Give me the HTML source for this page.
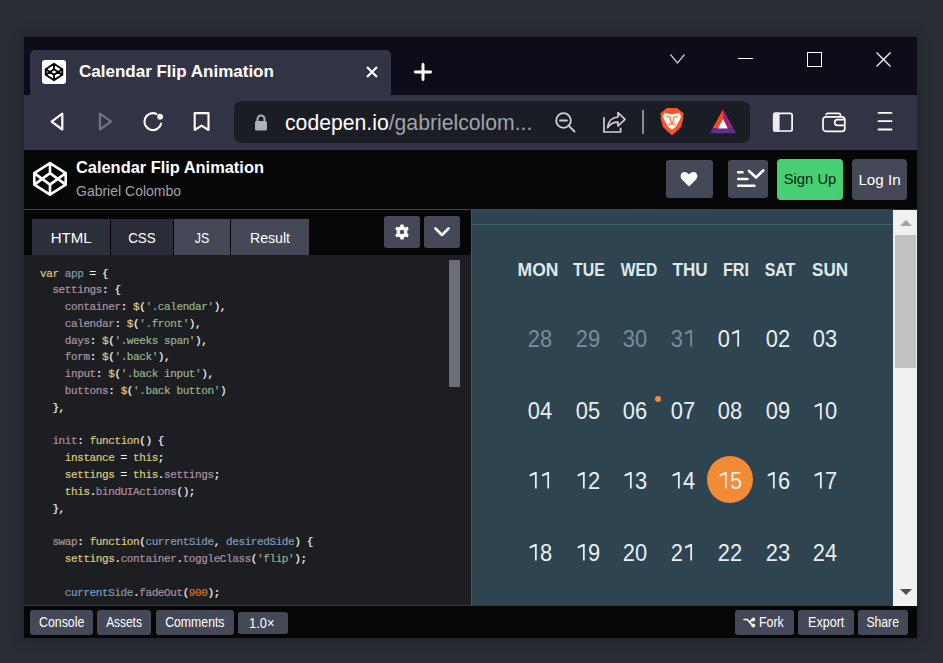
<!DOCTYPE html>
<html><head><meta charset="utf-8">
<style>
*{box-sizing:border-box}
html,body{margin:0;padding:0}
body{width:943px;height:663px;overflow:hidden;position:relative;background:#2a2d35;font-family:"Liberation Sans",sans-serif;color:#fff}
.a{position:absolute}
svg{position:absolute;overflow:visible}
.btn{position:absolute;background:#444857;border-radius:3px;color:#fff;text-align:center;white-space:nowrap}
.t{display:inline-block;text-indent:0}
.fb{height:25px;font-size:14px;line-height:25px}
.code{position:absolute;left:40px;top:265.5px;font-family:"Liberation Mono",monospace;font-size:11px;letter-spacing:-0.4px;line-height:16.8px;white-space:pre;color:#f2f2f2;-webkit-text-stroke:0.2px currentColor}
.k{color:#ddca7e}.v{color:#809bbd}.p{color:#ab92a4}.s{color:#96b38a}.n{color:#d0782a}
.wd{position:absolute;top:262px;width:60px;text-align:center;font-size:17.8px;font-weight:bold;line-height:17.8px;color:#dfe9ec}
.num{position:absolute;width:50px;text-align:center;font-size:23px;line-height:23px;transform:scaleX(0.95);color:#e9eff1}
.num.m{color:#778d97}
.num svg.one{position:static;display:inline-block;vertical-align:baseline;overflow:visible}
</style></head>
<body>
<!-- window frame / tab strip -->
<div class="a" style="left:24px;top:37px;width:893px;height:601px;box-shadow:0 0 12px 2px rgba(0,0,0,0.26)"></div>
<div class="a" style="left:24px;top:37px;width:893px;height:58px;background:#0c0d18"></div>
<div class="a" style="left:30px;top:50px;width:361px;height:45px;background:#323445;border-radius:5px 5px 0 0"></div>
<!-- favicon -->
<div class="a" style="left:42px;top:60px;width:24px;height:24px;background:#fff;border-radius:3px"></div>
<svg style="left:42px;top:60px" width="24" height="24" viewBox="0 0 24 24"><path d="M12 3.8L20.3 9.2V14.8L12 20.1L3.7 14.8V9.2Z M12 3.8V9.2 M12 20.1V14.8 M3.7 9.2L12 14.8L20.3 9.2 M3.7 14.8L12 9.2L20.3 14.8" fill="none" stroke="#000" stroke-width="1.85" stroke-linejoin="round"/></svg>
<div class="a" style="left:79px;top:61px;font-size:17px;font-weight:bold;line-height:22px;color:#fff;white-space:nowrap">Calendar Flip Animation</div>
<svg style="left:366px;top:66px" width="12" height="12"><path d="M1 1L11 11M11 1L1 11" stroke="#fff" stroke-width="2.2"/></svg>
<svg style="left:414px;top:63px" width="18" height="18"><path d="M9 1.4V16.6M1.4 9H16.6" stroke="#fff" stroke-width="2.9" stroke-linecap="round"/></svg>
<!-- window controls -->
<svg style="left:670px;top:54px" width="15" height="10"><path d="M0.5 0.5L7.5 9L14.5 0.5" fill="none" stroke="#c8c9cf" stroke-width="1.2"/></svg>
<div class="a" style="left:738px;top:58px;width:15px;height:1.3px;background:#fff"></div>
<div class="a" style="left:807px;top:52px;width:15px;height:15px;border:1.3px solid #fff"></div>
<svg style="left:876px;top:52px" width="15" height="15"><path d="M0.5 0.5L14.5 14.5M14.5 0.5L0.5 14.5" stroke="#fff" stroke-width="1.3"/></svg>

<!-- toolbar -->
<div class="a" style="left:24px;top:95px;width:893px;height:55px;background:#323445"></div>
<svg style="left:48px;top:110px" width="18" height="24"><path d="M14.3 3.6V19.5L3.6 11.55Z" fill="none" stroke="#fff" stroke-width="2.2" stroke-linejoin="round"/></svg>
<svg style="left:96px;top:110px" width="18" height="24"><path d="M3.9 3.6V19.5L15 11.55Z" fill="none" stroke="#737483" stroke-width="2.2" stroke-linejoin="round"/></svg>
<svg style="left:141px;top:110px" width="24" height="24"><path d="M15.5 3.9A8.5 8.5 0 1 0 20.2 13.6" fill="none" stroke="#fff" stroke-width="2.1" stroke-linecap="round"/><circle cx="19.1" cy="6.7" r="2.9" fill="#fff"/></svg>
<svg style="left:191px;top:110px" width="20" height="24"><path d="M3.7 3.1H17.5V20L10.6 15.6L3.7 20Z" fill="none" stroke="#fff" stroke-width="2.1" stroke-linejoin="round"/></svg>
<!-- url box -->
<div class="a" style="left:234px;top:101px;width:516px;height:42px;background:#1b1d25;border-radius:8px"></div>
<svg style="left:254px;top:114px" width="14" height="17"><path d="M3.5 7V5A3.5 3.5 0 0 1 10.5 5V7" fill="none" stroke="#aeb0b6" stroke-width="2"/><rect x="1" y="7" width="12" height="9.5" rx="1.5" fill="#aeb0b6"/></svg>
<div class="a" style="left:285px;top:110.3px;font-size:21.2px;line-height:26px;white-space:nowrap"><span style="color:#fff">codepen.io</span><span style="color:#9fa3ab">/gabrielcolom...</span></div>
<!-- zoom out -->
<svg style="left:555px;top:112px" width="21" height="21"><circle cx="8.5" cy="8.5" r="7.3" fill="none" stroke="#d0d1d6" stroke-width="1.8"/><path d="M5 8.5H12M13.8 13.8L19.5 19.5" stroke="#d0d1d6" stroke-width="1.8" stroke-linecap="round"/></svg>
<!-- share -->
<svg style="left:603px;top:111px" width="24" height="23"><path d="M1 6.2V21H17.6V16.7" fill="none" stroke="#d0d1d6" stroke-width="1.7"/><path d="M4.6 16.7C5 10.5 9 6.5 15 6V1.6L22 8.4L15 15V11.2C10 11.2 7 13 4.6 16.7Z" fill="none" stroke="#d0d1d6" stroke-width="1.7" stroke-linejoin="round"/></svg>
<div class="a" style="left:642px;top:110px;width:1.8px;height:24px;background:#8a8c95"></div>
<!-- brave lion -->
<svg style="left:655px;top:105px" width="34" height="34" viewBox="0 0 34 34"><path d="M12 3H22L24.5 5L28.8 8.5L28 11L28.5 13L26 22Q22 26.5 17 30.3Q12 26.5 8 22L5.5 13L6 11L5.2 8.5L9.5 5Z" fill="#fb542b"/><path d="M9.5 7.8L14 9H20L24.5 7.8L26.2 11.5L25 14.5L23 18L21 21.8L17 24.8L13 21.8L11 18L9 14.5L7.8 11.5Z" fill="#fff4ee"/><path d="M11.5 11.2L15.2 12.4L16 17.2L17 18L18 17.2L18.8 12.4L22.5 11.2M13.5 19.6L17 18.8L20.5 19.6" fill="none" stroke="#f26a3d" stroke-width="1.1" stroke-linejoin="round"/></svg>
<!-- BAT -->
<svg style="left:709px;top:109px" width="28" height="25" viewBox="0 0 28 25"><path d="M14 0.6L3.45 19.6H8.8L14 9.8Z" fill="#ff4724"/><path d="M14 0.6L24.5 19.6H18.8L14 9.8Z" fill="#a3207a"/><path d="M0.9 24.2H27L24.5 19.6H3.45Z" fill="#662d91"/><path d="M14 9.8L8.8 19.6H18.8Z" fill="#fff"/></svg>
<!-- right toolbar icons -->
<svg style="left:772px;top:112px" width="22" height="20"><rect x="1.7" y="1.4" width="18.4" height="17.6" rx="1.8" fill="none" stroke="#fff" stroke-width="1.7"/><rect x="1" y="0.6" width="6.6" height="19.2" rx="1.5" fill="#ececf0"/></svg>
<svg style="left:821px;top:112px" width="26" height="21"><path d="M5 3.2V3A1.8 1.8 0 0 1 6.8 1.4H17.5A2 2 0 0 1 19.5 3.4V4.5" fill="none" stroke="#fff" stroke-width="1.6"/><rect x="2" y="4.8" width="21.8" height="14.6" rx="3" fill="none" stroke="#fff" stroke-width="1.7"/><path d="M23.8 7.6H16.5A2.85 2.85 0 0 0 16.5 13.3H23.8" fill="none" stroke="#fff" stroke-width="1.7"/></svg>
<svg style="left:876px;top:110px" width="18" height="22"><path d="M2.5 2.9H15.5M2.5 11.2H15.5M2.5 19.5H15.5" stroke="#fff" stroke-width="1.8" stroke-linecap="round"/></svg>

<!-- codepen header -->
<div class="a" style="left:24px;top:150px;width:893px;height:59px;background:#060606"></div>
<svg style="left:32px;top:161px" width="36" height="36" viewBox="0 0 36 36"><path d="M18 2.1L33.7 12.1V23.6L18 33.7L2.3 23.6V12.1Z M18 2.1V12.1 M18 33.7V23.6 M2.3 12.1L18 23.6L33.7 12.1 M2.3 23.6L18 12.1L33.7 23.6" fill="none" stroke="#fff" stroke-width="2.6" stroke-linejoin="round"/></svg>
<div class="a" style="left:76px;top:157px;font-size:16.4px;font-weight:bold;line-height:20px;color:#fff;white-space:nowrap">Calendar Flip Animation</div>
<div class="a" style="left:76px;top:182px;font-size:14px;line-height:18px;color:#a0a2ac;white-space:nowrap">Gabriel Colombo</div>
<div class="btn" style="left:666px;top:160px;width:47px;height:38px;"></div>
<svg style="left:680px;top:171px" width="18" height="16" viewBox="0 0 18 16"><path d="M9 15.5L2 8.5C-0.5 6 0.5 1 4.5 1C6.5 1 8 2.3 9 3.5C10 2.3 11.5 1 13.5 1C17.5 1 18.5 6 16 8.5Z" fill="#fff"/></svg>
<div class="btn" style="left:728px;top:160px;width:40px;height:38px;"></div>
<svg style="left:735px;top:166px" width="30" height="24"><path d="M3.2 6.3H7.5M3.2 13H12.5M3.2 19.8H19.5" stroke="#fff" stroke-width="2.5" stroke-linecap="round"/><path d="M14 5L21 11.5L28.2 4.5" fill="none" stroke="#fff" stroke-width="2.6" stroke-linecap="round"/></svg>
<div class="btn" style="left:777px;top:159px;width:66px;height:41px;background:#47cf73;color:#06200e;font-size:14.8px;line-height:41px;border-radius:4px">Sign Up</div>
<div class="btn" style="left:852px;top:159px;width:55px;height:41px;font-size:15.2px;line-height:41px;border-radius:4px">Log In</div>
<div class="a" style="left:24px;top:209px;width:447px;height:1px;background:#44464d"></div>
<div class="a" style="left:471px;top:209px;width:422px;height:1px;background:linear-gradient(90deg,#44494f,#2e4551)"></div>

<!-- editor side -->
<div class="a" style="left:24px;top:210px;width:447px;height:45px;background:#060606"></div>
<div class="a" style="left:32px;top:219px;width:78px;height:36px;background:#2c303b;font-size:15.5px;line-height:37px;text-align:center"><span class="t" style="transform:scaleX(0.97)">HTML</span></div>
<div class="a" style="left:111px;top:219px;width:62px;height:36px;background:#2a2d37;font-size:15.5px;line-height:37px;text-align:center"><span class="t" style="transform:scaleX(0.86)">CSS</span></div>
<div class="a" style="left:174px;top:219px;width:56px;height:36px;background:#454857;font-size:15.5px;line-height:37px;text-align:center"><span class="t" style="transform:scaleX(0.80)">JS</span></div>
<div class="a" style="left:231px;top:219px;width:78px;height:36px;background:#454857;font-size:15.5px;line-height:37px;text-align:center"><span class="t" style="transform:scaleX(0.91)">Result</span></div>
<div class="btn" style="left:384px;top:216px;width:36px;height:32px"></div>
<svg style="left:394px;top:224px" width="16" height="16" viewBox="0 0 16 16"><path d="M6.6 0.5H9.4L9.9 2.6L11.4 3.4L13.4 2.6L14.8 5L13.3 6.5V9.5L14.8 11L13.4 13.4L11.4 12.6L9.9 13.4L9.4 15.5H6.6L6.1 13.4L4.6 12.6L2.6 13.4L1.2 11L2.7 9.5V6.5L1.2 5L2.6 2.6L4.6 3.4L6.1 2.6Z" fill="#fff"/><circle cx="8" cy="8" r="2.2" fill="#444857"/></svg>
<div class="btn" style="left:424px;top:216px;width:36px;height:32px"></div>
<svg style="left:434px;top:227px" width="16" height="10"><path d="M1.5 1.5L8 8L14.5 1.5" fill="none" stroke="#fff" stroke-width="2.6" stroke-linecap="round" stroke-linejoin="round"/></svg>
<!-- code area -->
<div class="a" style="left:24px;top:255px;width:447px;height:351px;background:#1d1e22"></div>
<div class="a" style="left:449px;top:260px;width:11px;height:127px;background:#6b6e78"></div>
<div class="code"><span class="k">var</span> <span class="v">app</span> = {
  <span class="p">settings</span>: {
    <span class="p">container</span>: <span class="k">$</span>(<span class="s">'.calendar'</span>),
    <span class="p">calendar</span>: <span class="k">$</span>(<span class="s">'.front'</span>),
    <span class="p">days</span>: <span class="k">$</span>(<span class="s">'.weeks span'</span>),
    <span class="p">form</span>: <span class="k">$</span>(<span class="s">'.back'</span>),
    <span class="p">input</span>: <span class="k">$</span>(<span class="s">'.back input'</span>),
    <span class="p">buttons</span>: <span class="k">$</span>(<span class="s">'.back button'</span>)
  },

  <span class="p">init</span>: <span class="k">function</span>() {
    <span class="k">instance</span> = <span class="k">this</span>;
    <span class="k">settings</span> = <span class="k">this</span>.<span class="p">settings</span>;
    <span class="k">this</span>.<span class="p">bindUIActions</span>();
  },

  <span class="p">swap</span>: <span class="k">function</span>(<span class="v">currentSide</span>, <span class="v">desiredSide</span>) {
    <span class="k">settings</span>.<span class="p">container</span>.<span class="p">toggleClass</span>(<span class="s">'flip'</span>);

    <span class="v">currentSide</span>.<span class="p">fadeOut</span>(<span class="n">900</span>);
</div>

<!-- result side -->
<div class="a" style="left:471px;top:210px;width:422px;height:396px;background:#2e4551"></div>
<div class="a" style="left:471px;top:210px;width:1px;height:395px;background:#4f5560"></div>
<div class="a" style="left:24px;top:605px;width:869px;height:1px;background:#35383f"></div>
<div class="a" style="left:472px;top:224px;width:421px;height:1px;background:#3f6470"></div>
<!-- scrollbar -->
<div class="a" style="left:893px;top:210px;width:24px;height:396px;background:#f1f1f1"></div>
<svg style="left:900px;top:220px" width="12" height="6"><path d="M0 6L6 0L12 6Z" fill="#a3a3a3"/></svg>
<div class="a" style="left:895px;top:235px;width:21px;height:133px;background:#c1c1c1"></div>
<svg style="left:900px;top:589px" width="12" height="6"><path d="M0 0L12 0L6 6Z" fill="#505050"/></svg>

<!-- calendar -->
<div class="a" style="left:706.6px;top:456px;width:46.6px;height:47.4px;border-radius:50%;background:#f28a36"></div>
<div class="a" style="left:655px;top:396px;width:6px;height:6px;border-radius:50%;background:#f28a36"></div>
<div class="wd" style="left:507.5px;transform:scaleX(0.983)">MON</div>
<div class="wd" style="left:559.3px;transform:scaleX(0.894)">TUE</div>
<div class="wd" style="left:609.0px;transform:scaleX(0.879)">WED</div>
<div class="wd" style="left:660.4px;transform:scaleX(0.960)">THU</div>
<div class="wd" style="left:706.0px;transform:scaleX(0.910)">FRI</div>
<div class="wd" style="left:750.0px;transform:scaleX(0.897)">SAT</div>
<div class="wd" style="left:800.0px;transform:scaleX(0.957)">SUN</div>
<div class="num m" style="left:515.3px;top:328.0px">28</div>
<div class="num m" style="left:563.0px;top:328.0px">29</div>
<div class="num m" style="left:610.0px;top:328.0px">30</div>
<div class="num m" style="left:657.5px;top:328.0px">3<svg class="one" width="12.8" height="16.6" viewBox="0 0 12.8 16.6"><path d="M7.7 0H9.55V16.6H7.7V2.6L2.1 4.55V2.6Z" fill="currentColor"/></svg></div>
<div class="num" style="left:705.0px;top:328.0px">0<svg class="one" width="12.8" height="16.6" viewBox="0 0 12.8 16.6"><path d="M7.7 0H9.55V16.6H7.7V2.6L2.1 4.55V2.6Z" fill="currentColor"/></svg></div>
<div class="num" style="left:752.5px;top:328.0px">02</div>
<div class="num" style="left:800.0px;top:328.0px">03</div>
<div class="num" style="left:515.3px;top:400.3px">04</div>
<div class="num" style="left:563.0px;top:400.3px">05</div>
<div class="num" style="left:610.0px;top:400.3px">06</div>
<div class="num" style="left:657.5px;top:400.3px">07</div>
<div class="num" style="left:705.0px;top:400.3px">08</div>
<div class="num" style="left:752.5px;top:400.3px">09</div>
<div class="num" style="left:800.0px;top:400.3px"><svg class="one" width="12.8" height="16.6" viewBox="0 0 12.8 16.6"><path d="M7.7 0H9.55V16.6H7.7V2.6L2.1 4.55V2.6Z" fill="currentColor"/></svg>0</div>
<div class="num" style="left:515.3px;top:469.6px"><svg class="one" width="12.8" height="16.6" viewBox="0 0 12.8 16.6"><path d="M7.7 0H9.55V16.6H7.7V2.6L2.1 4.55V2.6Z" fill="currentColor"/></svg><svg class="one" width="12.8" height="16.6" viewBox="0 0 12.8 16.6"><path d="M7.7 0H9.55V16.6H7.7V2.6L2.1 4.55V2.6Z" fill="currentColor"/></svg></div>
<div class="num" style="left:563.0px;top:469.6px"><svg class="one" width="12.8" height="16.6" viewBox="0 0 12.8 16.6"><path d="M7.7 0H9.55V16.6H7.7V2.6L2.1 4.55V2.6Z" fill="currentColor"/></svg>2</div>
<div class="num" style="left:610.0px;top:469.6px"><svg class="one" width="12.8" height="16.6" viewBox="0 0 12.8 16.6"><path d="M7.7 0H9.55V16.6H7.7V2.6L2.1 4.55V2.6Z" fill="currentColor"/></svg>3</div>
<div class="num" style="left:657.5px;top:469.6px"><svg class="one" width="12.8" height="16.6" viewBox="0 0 12.8 16.6"><path d="M7.7 0H9.55V16.6H7.7V2.6L2.1 4.55V2.6Z" fill="currentColor"/></svg>4</div>
<div class="num" style="left:705.0px;top:469.6px"><svg class="one" width="12.8" height="16.6" viewBox="0 0 12.8 16.6"><path d="M7.7 0H9.55V16.6H7.7V2.6L2.1 4.55V2.6Z" fill="currentColor"/></svg>5</div>
<div class="num" style="left:752.5px;top:469.6px"><svg class="one" width="12.8" height="16.6" viewBox="0 0 12.8 16.6"><path d="M7.7 0H9.55V16.6H7.7V2.6L2.1 4.55V2.6Z" fill="currentColor"/></svg>6</div>
<div class="num" style="left:800.0px;top:469.6px"><svg class="one" width="12.8" height="16.6" viewBox="0 0 12.8 16.6"><path d="M7.7 0H9.55V16.6H7.7V2.6L2.1 4.55V2.6Z" fill="currentColor"/></svg>7</div>
<div class="num" style="left:515.3px;top:541.7px"><svg class="one" width="12.8" height="16.6" viewBox="0 0 12.8 16.6"><path d="M7.7 0H9.55V16.6H7.7V2.6L2.1 4.55V2.6Z" fill="currentColor"/></svg>8</div>
<div class="num" style="left:563.0px;top:541.7px"><svg class="one" width="12.8" height="16.6" viewBox="0 0 12.8 16.6"><path d="M7.7 0H9.55V16.6H7.7V2.6L2.1 4.55V2.6Z" fill="currentColor"/></svg>9</div>
<div class="num" style="left:610.0px;top:541.7px">20</div>
<div class="num" style="left:657.5px;top:541.7px">2<svg class="one" width="12.8" height="16.6" viewBox="0 0 12.8 16.6"><path d="M7.7 0H9.55V16.6H7.7V2.6L2.1 4.55V2.6Z" fill="currentColor"/></svg></div>
<div class="num" style="left:705.0px;top:541.7px">22</div>
<div class="num" style="left:752.5px;top:541.7px">23</div>
<div class="num" style="left:800.0px;top:541.7px">24</div>

<!-- footer -->
<div class="a" style="left:24px;top:606px;width:893px;height:32px;background:#060606"></div>
<div class="btn fb" style="left:30px;top:610px;width:63px"><span class="t" style="transform:scaleX(.88)">Console</span></div>
<div class="btn fb" style="left:97px;top:610px;width:54px"><span class="t" style="transform:scaleX(.85)">Assets</span></div>
<div class="btn fb" style="left:156px;top:610px;width:78px"><span class="t" style="transform:scaleX(.876)">Comments</span></div>
<div class="btn fb" style="left:238px;top:612px;width:50px;height:22px;line-height:22px;text-indent:-3px"><span class="t" style="transform:scaleX(.92)">1.0×</span></div>
<div class="btn fb" style="left:735px;top:610px;width:59px"></div>
<svg style="left:743px;top:616px" width="13" height="12" viewBox="0 0 13 12"><path d="M1 3.5H4.3L9.6 9.5M6.6 6.2L9.4 3.5" fill="none" stroke="#fff" stroke-width="1.6" stroke-linecap="round"/><circle cx="10.3" cy="3.5" r="1.9" fill="#fff"/><circle cx="10.3" cy="9.5" r="1.9" fill="#fff"/></svg>
<div class="a" style="left:759px;top:610px;font-size:14px;line-height:25px;white-space:nowrap"><span class="t" style="transform:scaleX(.886);transform-origin:0 50%">Fork</span></div>
<div class="btn fb" style="left:798px;top:610px;width:56px"><span class="t" style="transform:scaleX(.895)">Export</span></div>
<div class="btn fb" style="left:858px;top:610px;width:50px"><span class="t" style="transform:scaleX(.87)">Share</span></div>
</body></html>
